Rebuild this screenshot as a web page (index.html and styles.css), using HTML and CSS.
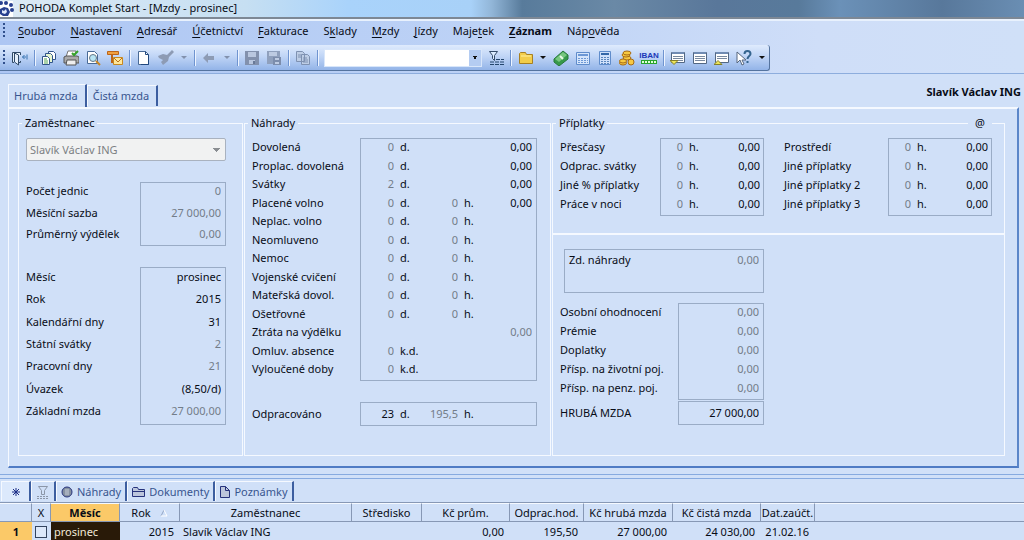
FILE: index.html
```html
<!DOCTYPE html>
<html lang="cs">
<head>
<meta charset="utf-8">
<title>POHODA Komplet Start - [Mzdy - prosinec]</title>
<link rel="stylesheet" href="styles.css">
</head>
<body>
<header class="titlebar">
  <svg class="logo" width="16" height="16" viewBox="0 0 16 16"><path d="M0 0h13v16H0z" fill="#fff"/><g fill="#27408f"><path d="M0 8l4-2 4 1 2 4-2 4H3l-3-2z"/><circle cx="1" cy="2" r="2"/><circle cx="6" cy="2" r="2"/><circle cx="11" cy="4" r="2"/><circle cx="12" cy="9" r="2"/></g><path d="M2 9l2 1 2-2 1 3-2 2-3-1z" fill="#dfe8fa"/></svg>
  <span>POHODA Komplet Start - [Mzdy - prosinec]</span>
</header>
<div class="bars">
  <nav class="menu">
    <span class="grip"></span>
    <a href="#"><u>S</u>oubor</a><a href="#"><u>N</u>astavení</a><a href="#"><u>A</u>dresář</a><a href="#"><u>Ú</u>četnictví</a><a href="#"><u>F</u>akturace</a><a href="#">S<u>k</u>lady</a><a href="#"><u>M</u>zdy</a><a href="#"><u>J</u>ízdy</a><a href="#">Maje<u>t</u>ek</a><a href="#" class="strong"><u>Z</u>áznam</a><a href="#">Náp<u>o</u>věda</a>
  </nav>
  <div class="toolbar">
    <span class="grip"></span>
    <button aria-label="Konec"><svg viewBox="0 0 16 16" fill="none" stroke="#304a68"><path d="M0.500 12.500V2.500H8.500V5M8.500 11v1.500H7M0.500 12.500H2M2.500 3l4 2v10l-4-3z" fill="#e6f0fc"/><path d="M15 4.500v5M14 7H10.500M12.500 5l-2 2 2 2" stroke="#3773b0"/></svg></button>
    <i class="sep"></i>
    <button aria-label="Agendy"><svg viewBox="0 0 16 16" stroke="#31558b"><path d="M7.500 1.500h5l2 2v6h-7z" fill="#fff"/><path d="M4.500 3.500h5l2 2v7h-7z" fill="#e6f6d1"/><path d="M1.500 6.500h5l2 2v6h-7z" fill="#fff"/><path d="M3 9h3M3 11h4M3 13h4" stroke="#55a555"/></svg></button>
    <button aria-label="Tisk"><svg viewBox="0 0 16 16"><path d="M5 1h8l-2 6H3z" fill="#fff" stroke="#777"/><path d="M1 7l2-1h11l2 1v6H1z" fill="#aaa" stroke="#555"/><path d="M4 10h9v5H3z" fill="#eee" stroke="#555"/><path d="M9 3l2 2 4-4" fill="none" stroke="#36a329" stroke-width="2"/></svg></button>
    <button aria-label="Náhled"><svg viewBox="0 0 16 16"><path d="M2.500 1.500h7l3 3v9h-10z" fill="#fff" stroke="#496a96"/><circle cx="8" cy="8" r="3.500" fill="#b8e6f5" stroke="#678"/><path d="M11 11l4 4" stroke="#c78624" stroke-width="2"/></svg></button>
    <button aria-label="Odeslat"><svg viewBox="0 0 16 16"><path d="M0.500 1.500h11v3h-11z" fill="#f0a040" stroke="#bc6418"/><path d="M5 5v8" stroke="#bc6418" stroke-width="2"/><path d="M6.500 7.500h9v7h-9z" fill="#ffe69a" stroke="#c78820"/><path d="M7 8l4 4 4-4" fill="none" stroke="#b87317"/></svg></button>
    <i class="sep"></i>
    <button aria-label="Nový"><svg viewBox="0 0 16 16"><path d="M2.500 1.500h7l3 3v10h-10z" fill="#fff" stroke="#496a96"/><path d="M9.500 1.500v3h3M12.500 5v9.500H5" fill="none" stroke="#20477d"/></svg></button>
    <button aria-label="Uložit a zavřít"><svg viewBox="0 0 16 16" fill="#8d9bb4"><path d="M0 6l5-2 4 1 5-5 2 2-5 5-1 4-5 4-2-3 2-2-4-2z"/></svg></button>
    <button class="drop muted" aria-label="Další volby"></button>
    <i class="sep"></i>
    <button aria-label="Zpět"><svg viewBox="0 0 16 16" fill="#8d9bb4"><path d="M2 8l5-5v3h6v4H7v3z"/></svg></button>
    <button class="drop muted" aria-label="Historie"></button>
    <i class="sep"></i>
    <button aria-label="Uložit"><svg viewBox="0 0 16 16"><path d="M1 1h14v14H1z" fill="#8291ad"/><path d="M4 2h8v5H4zM5 10h6v4H5z" fill="#b9c7df"/><path d="M9 11h2v3H9z" fill="#687997"/></svg></button>
    <button aria-label="Uložit kopii"><svg viewBox="0 0 16 16"><path d="M1 1h13v13H1z" fill="#8fa0bd"/><path d="M3 2h8v4H3z" fill="#bdcbe2"/><path d="M7 7h8v8H7z" fill="#7c8dac"/><path d="M9 8h4v2H9zM9 12h4v2H9z" fill="#becce3"/></svg></button>
    <i class="sep"></i>
    <button aria-label="Kopírovat"><svg viewBox="0 0 16 16" fill="#bdcde5" stroke="#7e91b1"><path d="M1.500 1.500h6l2 2v8h-8zM6.500 4.500h6l2 2v8h-8z"/><path d="M3 5h3M3 7h3M8 8h4M8 10h5M8 12h5"/></svg></button>
    <i class="sep"></i>
    <select class="search" aria-label="Hledat"><option></option></select>
    <button aria-label="Výběr"><svg viewBox="0 0 16 16"><path d="M1.500 1.500h8l-3 4v5l-2-2v-3z" fill="#dcecff" stroke="#334a68"/><path d="M8 9.500h8M2 12h14M2 14.500h14" stroke="#24466d" stroke-dasharray="4 1"/></svg></button>
    <i class="sep"></i>
    <button aria-label="Složka"><svg viewBox="0 0 16 16"><path d="M2.500 3.500l1-1h5l1 2h6v9h-13z" fill="#f2cd4b" stroke="#a78022"/><path d="M4 6h10" stroke="#fff0a0"/></svg></button>
    <button class="drop" aria-label="Složky"></button>
    <button aria-label="Platba"><svg viewBox="0 0 16 16"><path d="M1 9l9-8 5 4v4l-9 7-5-4z" fill="#37994a" stroke="#27783b"/><path d="M2 9l8-7 4 3-8 7z" fill="#78c780"/><path d="M7 6l3 3" stroke="#e9f9e6" stroke-width="2"/></svg></button>
    <button aria-label="Kalkulačka"><svg viewBox="0 0 16 16"><path d="M1.500 2.500h13v12h-13z" fill="#d5e5fb" stroke="#5f8ccb"/><path d="M3 5h10" stroke="#6c98d6" stroke-width="2"/><path d="M3 8.500h10M3 10.500h10M3 12.500h10" stroke="#6c98d6" stroke-dasharray="2 1"/></svg></button>
    <button aria-label="Výpočet"><svg viewBox="0 0 16 16"><path d="M2.500 1.500h11v13h-11z" fill="#cfe0fa" stroke="#5f8ccb"/><path d="M4 4h8" stroke="#3468a8" stroke-width="2"/><path d="M4 7.500h8M4 9.500h8M4 11.500h8M4 13.500h8" stroke="#5a86bd" stroke-dasharray="2 1"/></svg></button>
    <button aria-label="Mince"><svg viewBox="0 0 16 16" fill="#f7c942" stroke="#a66a15"><ellipse cx="8" cy="8" rx="4" ry="2"/><ellipse cx="7" cy="5" rx="4" ry="2"/><ellipse cx="8" cy="3" rx="4" ry="2"/><ellipse cx="4" cy="13" rx="3.500" ry="2"/><ellipse cx="4" cy="11" rx="3.500" ry="2"/><circle cx="12" cy="12" r="3"/></svg></button>
    <button class="code" aria-label="IBAN"><span>IBAN</span><svg viewBox="0 0 16 4"><path d="M0 0h16v4H0z" fill="#28a52c"/><path d="M1 2h14" stroke="#dfffd8" stroke-width="2" stroke-dasharray="2 1"/></svg></button>
    <i class="sep"></i>
    <button aria-label="Poslední záznam"><svg viewBox="0 0 16 16"><path d="M1.500 2.500h13v10h-13z" fill="#fff" stroke="#526783"/><path d="M2 3h12" stroke="#6f8bb3" stroke-width="2"/><path d="M3 6.500h10M3 8.500h10M3 10.500h10" stroke="#7889a0"/><path d="M0 10.500h8l-4 4z" fill="#ede55a" stroke="#858029"/></svg></button>
    <button aria-label="Tabulka"><svg viewBox="0 0 16 16"><path d="M1.500 2.500h13v11h-13z" fill="#fff" stroke="#526783"/><path d="M2 3h12" stroke="#6f8bb3" stroke-width="2"/><path d="M3 6.500h10M3 8.500h10M3 10.500h10" stroke="#7889a0"/></svg></button>
    <button aria-label="První záznam"><svg viewBox="0 0 16 16"><path d="M1.500 2.500h13v10h-13z" fill="#fff" stroke="#526783"/><path d="M2 3h12" stroke="#6f8bb3" stroke-width="2"/><path d="M3 6.500h10M3 8.500h10" stroke="#7889a0"/><path d="M0 14.500h8l-4-4z" fill="#ede55a" stroke="#858029"/></svg></button>
    <button aria-label="Nápověda"><svg viewBox="0 0 16 16"><path d="M1 2v11l3-3 2 5 2-1-2-4h4z" fill="#fff" stroke="#56677e"/><path d="M8.500 4c0-4 6-4 6 0 0 2-3 2-3 5M11.500 11v2" fill="none" stroke="#35658f" stroke-width="2"/></svg></button>
    <button class="drop" aria-label="Další nápověda"></button>
  </div>
</div>
<main>
  <div class="formhead">
    <div class="tabs"><button class="tab active">Hrubá mzda</button><button class="tab">Čistá mzda</button></div>
    <strong>Slavík Václav ING</strong>
  </div>
  <form class="panel">
    <fieldset class="employee">
      <legend>Zaměstnanec</legend>
      <select class="person" aria-label="Zaměstnanec" disabled><option>Slavík Václav ING</option></select>
      <div class="pair short">
        <div class="labels"><label for="a1">Počet jednic</label><label for="a2">Měsíční sazba</label><label for="a3">Průměrný výdělek</label></div>
        <div class="box"><input id="a1" class="dim" value="0"><input id="a2" class="dim" value="27 000,00"><input id="a3" class="dim" value="0,00"></div>
      </div>
      <div class="pair month">
        <div class="labels"><label for="b1">Měsíc</label><label for="b2">Rok</label><label for="b3">Kalendářní dny</label><label for="b4">Státní svátky</label><label for="b5">Pracovní dny</label><label for="b6">Úvazek</label><label for="b7">Základní mzda</label></div>
        <div class="box"><input id="b1" value="prosinec"><input id="b2" value="2015"><input id="b3" value="31"><input id="b4" class="dim" value="2"><input id="b5" class="dim" value="21"><input id="b6" value="(8,50/d)"><input id="b7" class="dim" value="27 000,00"></div>
      </div>
    </fieldset>
    <fieldset class="leave">
      <legend>Náhrady</legend>
      <div class="pair days">
        <div class="labels"><label for="c1">Dovolená</label><label for="c2">Proplac. dovolená</label><label for="c3">Svátky</label><label for="c4">Placené volno</label><label for="c5">Neplac. volno</label><label for="c6">Neomluveno</label><label for="c7">Nemoc</label><label for="c8">Vojenské cvičení</label><label for="c9">Mateřská dovol.</label><label for="c10">Ošetřovné</label><label for="c11">Ztráta na výdělku</label><label for="c12">Omluv. absence</label><label for="c13">Vyloučené doby</label></div>
        <div class="box">
          <div class="row"><input id="c1" class="dim" value="0"><span>d.</span><input class="sum" aria-label="Dovolená Kč" value="0,00"></div>
          <div class="row"><input id="c2" class="dim" value="0"><span>d.</span><input class="sum" aria-label="Proplacená dovolená Kč" value="0,00"></div>
          <div class="row"><input id="c3" class="dim" value="2"><span>d.</span><input class="sum" aria-label="Svátky Kč" value="0,00"></div>
          <div class="row"><input id="c4" class="dim" value="0"><span>d.</span><input class="dim" aria-label="Placené volno h." value="0"><span>h.</span><input class="sum" aria-label="Placené volno Kč" value="0,00"></div>
          <div class="row"><input id="c5" class="dim" value="0"><span>d.</span><input class="dim" aria-label="Neplacené volno h." value="0"><span>h.</span></div>
          <div class="row"><input id="c6" class="dim" value="0"><span>d.</span><input class="dim" aria-label="Neomluveno h." value="0"><span>h.</span></div>
          <div class="row"><input id="c7" class="dim" value="0"><span>d.</span><input class="dim" aria-label="Nemoc h." value="0"><span>h.</span></div>
          <div class="row"><input id="c8" class="dim" value="0"><span>d.</span><input class="dim" aria-label="Vojenské cvičení h." value="0"><span>h.</span></div>
          <div class="row"><input id="c9" class="dim" value="0"><span>d.</span><input class="dim" aria-label="Mateřská dovolená h." value="0"><span>h.</span></div>
          <div class="row"><input id="c10" class="dim" value="0"><span>d.</span><input class="dim" aria-label="Ošetřovné h." value="0"><span>h.</span></div>
          <div class="row"><input id="c11" class="sum dim" value="0,00"></div>
          <div class="row"><input id="c12" class="dim" value="0"><span>k.d.</span></div>
          <div class="row"><input id="c13" class="dim" value="0"><span>k.d.</span></div>
        </div>
      </div>
      <div class="pair single">
        <div class="labels"><label for="d1">Odpracováno</label></div>
        <div class="box"><div class="row"><input id="d1" value="23"><span>d.</span><input class="dim" aria-label="Odpracováno h." value="195,5"><span>h.</span></div></div>
      </div>
    </fieldset>
    <fieldset class="extras">
      <legend>Příplatky</legend>
      <span class="at">@</span>
      <div class="bonus">
        <div class="pair four">
          <div class="labels"><label for="e1">Přesčasy</label><label for="e2">Odprac. svátky</label><label for="e3">Jiné % příplatky</label><label for="e4">Práce v noci</label></div>
          <div class="box">
            <div class="hrow"><input id="e1" class="dim" value="0"><span>h.</span><input aria-label="Přesčasy Kč" value="0,00"></div>
            <div class="hrow"><input id="e2" class="dim" value="0"><span>h.</span><input aria-label="Odpracované svátky Kč" value="0,00"></div>
            <div class="hrow"><input id="e3" class="dim" value="0"><span>h.</span><input aria-label="Jiné % příplatky Kč" value="0,00"></div>
            <div class="hrow"><input id="e4" class="dim" value="0"><span>h.</span><input aria-label="Práce v noci Kč" value="0,00"></div>
          </div>
        </div>
        <div class="pair four">
          <div class="labels"><label for="f1">Prostředí</label><label for="f2">Jiné příplatky</label><label for="f3">Jiné příplatky 2</label><label for="f4">Jiné příplatky 3</label></div>
          <div class="box">
            <div class="hrow"><input id="f1" class="dim" value="0"><span>h.</span><input aria-label="Prostředí Kč" value="0,00"></div>
            <div class="hrow"><input id="f2" class="dim" value="0"><span>h.</span><input aria-label="Jiné příplatky Kč" value="0,00"></div>
            <div class="hrow"><input id="f3" class="dim" value="0"><span>h.</span><input aria-label="Jiné příplatky 2 Kč" value="0,00"></div>
            <div class="hrow"><input id="f4" class="dim" value="0"><span>h.</span><input aria-label="Jiné příplatky 3 Kč" value="0,00"></div>
          </div>
        </div>
      </div>
      <div class="gross">
        <div class="box health"><label for="g1">Zd. náhrady</label><input id="g1" class="dim" value="0,00"></div>
        <div class="pair five">
          <div class="labels"><label for="h1">Osobní ohodnocení</label><label for="h2">Prémie</label><label for="h3">Doplatky</label><label for="h4">Přísp. na životní poj.</label><label for="h5">Přísp. na penz. poj.</label></div>
          <div class="box"><input id="h1" class="dim" value="0,00"><input id="h2" class="dim" value="0,00"><input id="h3" class="dim" value="0,00"><input id="h4" class="dim" value="0,00"><input id="h5" class="dim" value="0,00"></div>
        </div>
        <div class="pair single">
          <div class="labels"><label for="i1">HRUBÁ MZDA</label></div>
          <div class="box"><input id="i1" value="27 000,00"></div>
        </div>
      </div>
    </fieldset>
  </form>
</main>
<section class="records">
  <div class="tabs low">
    <button class="tab star active" aria-label="Vše"><svg width="8" height="8" viewBox="0 0 8 8" stroke="#1b2d86"><path d="M4 0v8M0 4h8M1 1l6 6M7 1L1 7"/></svg></button>
    <button class="tab filter" aria-label="Filtr"><svg width="14" height="14" viewBox="0 0 14 14" fill="none" stroke="#8b96a8"><path d="M2.500 1.500h9l-3 4v4h-3v-4z"/><path d="M1 11.500h12M1 13.500h12" stroke-dasharray="2 1"/></svg></button>
    <button class="tab"><svg width="12" height="12" viewBox="0 0 12 12"><circle cx="6" cy="6" r="5" fill="#8590a0" stroke="#26337c"/><path d="M4 4h4M4 6h4M4 8h4" stroke="#c7ceda"/></svg>Náhrady</button>
    <button class="tab"><svg width="13" height="12" viewBox="0 0 13 12"><path d="M.5 10.500v-8l1-1h4l1 2h6v7z" fill="#bcc6dc" stroke="#26337c"/><path d="M1 5.500h11" stroke="#26337c"/></svg>Dokumenty</button>
    <button class="tab"><svg width="10" height="12" viewBox="0 0 10 12"><path d="M.5.5h5l4 4v7h-9z" fill="#bcc6dc" stroke="#26337c"/><path d="M5.500.5v4h4" fill="none" stroke="#26337c"/></svg>Poznámky</button>
  </div>
  <table>
    <colgroup><col class="w32"><col class="w19"><col class="w69"><col class="w60"><col class="w172"><col class="w70"><col class="w88"><col class="w74"><col class="w89"><col class="w88"><col class="w54"><col></colgroup>
    <thead><tr><th></th><th>X</th><th class="current">Měsíc</th><th>Rok<svg class="sort" width="8" height="8" viewBox="0 0 8 8"><path d="M1 7L4 1" stroke="#92a5c4"/><path d="M4 1l3 6H1" fill="none" stroke="#fff"/></svg></th><th>Zaměstnanec</th><th>Středisko</th><th>Kč prům.</th><th>Odprac.hod.</th><th>Kč hrubá mzda</th><th>Kč čistá mzda</th><th>Dat.zaúčt.</th><th></th></tr></thead>
    <tbody><tr><td class="number">1</td><td class="check"><input type="checkbox" aria-label="Označit záznam 1"></td><td class="selected">prosinec</td><td class="num">2015</td><td>Slavík Václav ING</td><td></td><td class="num">0,00</td><td class="num">195,50</td><td class="num">27 000,00</td><td class="num">24 030,00</td><td class="num">21.02.16</td><td></td></tr></tbody>
  </table>
</section>
</body>
</html>
```

FILE: styles.css
```css
* { box-sizing: border-box; }
body { margin: 0; background: #d0e0f8; color: #080c16; font: 11px/16px "Noto Sans", "Open Sans", sans-serif; overflow: hidden; }
button, input, select { font: inherit; color: inherit; }
button { border: 0; padding: 0; background: none; }
svg { flex-shrink: 0; }
a { color: inherit; text-decoration: none; }
u { text-underline-offset: 2px; }
.titlebar { display: flex; align-items: center; gap: 3px; height: 19px; border-bottom: 2px solid #7d8895; background: linear-gradient(90deg, #dceaf5 0, #c6dff2 24%, #a9d3fb 34%, #a8d1f8 46%, #92b6d8 48%, #587b9b 51%, #6a89a6 60%, #59779a 70%, #587a9b 78%, #6b91b8 82%, #58789b 92%, #6a8eb3 100%); }
.titlebar span { padding-bottom: 1px; }
.bars { border-top: 2px solid #e8f1fd; border-bottom: 1px solid #8daddd; background: linear-gradient(90deg, #adc6f3, #bed3f6 50%, #cfdef8 80%, #d0e0f8); }
.menu { display: flex; align-items: center; gap: 15px; height: 24px; padding: 0 0 4px 3px; }
.menu .grip { margin-right: -3px; }
.grip { width: 3px; height: 16px; background: repeating-linear-gradient(#304f8c 0 2px, transparent 2px 4px) 0 0 / 2px 100% no-repeat; }
.strong { font-weight: 700; }
.toolbar { display: flex; align-items: center; gap: 6px; width: max-content; height: 26px; margin-bottom: 2px; padding: 0 3px; border-right: 1px solid #55749f; border-bottom: 1px solid #55749f; border-radius: 0 3px 3px 0; background: linear-gradient(#dfebfd, #c0d5f6 45%, #93b4e8); }
.toolbar svg { display: block; width: 16px; height: 16px; }
.toolbar .code { width: 16px; height: 14px; font: 700 8px/9px "Liberation Sans", sans-serif; color: #1b38b8; }
.code span { display: flex; justify-content: center; }
.toolbar .code svg { height: 4px; }
.sep { width: 1px; height: 16px; background: #6f94d0; box-shadow: 1px 0 #edf4ff; }
.drop { display: grid; place-items: center; width: 8px; height: 16px; }
.drop::after { content: ""; border: 3px solid transparent; border-top-color: #111; border-bottom: 0; }
.drop.muted::after { border-top-color: #8291ad; }
.search { appearance: none; width: 158px; height: 18px; border: 1px solid #d8e6fa; border-radius: 0; background: linear-gradient(to bottom right, #111 50%, transparent 50%) right 3px center / 3px 3px no-repeat, linear-gradient(to bottom left, #111 50%, transparent 50%) right 6px center / 3px 3px no-repeat, linear-gradient(#b4ccf2, #b4ccf2) right / 12px 100% no-repeat, #fff; }
main { padding: 10px 5px 6px 8px; border-bottom: 1px solid #86aae0; }
.formhead { display: flex; justify-content: space-between; align-items: flex-start; margin-right: -2px; }
.tabs { display: flex; }
.tab { display: flex; align-items: center; gap: 4px; height: 21px; margin-top: 1px; padding: 0 5px; border-top: 1px solid #f5f9ff; border-left: 1px solid #f5f9ff; border-right: 2px solid #3c5ea0; color: #38558f; }
.formhead .tab { padding-right: 7px; }
.formhead .active { height: 23px; margin-top: 0; }
.panel { display: grid; grid-template-columns: 225px 307px minmax(440px, 1fr); gap: 1px; padding: 6px 12px 10px 9px; border: solid #f5f9ff; border-width: 2px 2px 2px 1px; border-right-color: #5b86c9; border-bottom-color: #4f7bc4; }
fieldset { position: relative; min-width: 0; margin: 0; padding: 7px 13px 29px 7px; border: 1px solid #f5f9ff; }
legend { margin-left: -4px; padding: 0 3px; }
.extras legend { margin-left: 3px; }
.person { appearance: none; display: block; width: 100%; height: 23px; padding: 0 3px; border: 1px solid #a9b2bf; border-radius: 2px; opacity: 1; color: #7c8083; background: linear-gradient(to bottom right, #8a8e92 50%, transparent 50%) right 4px center / 4px 4px no-repeat, linear-gradient(to bottom left, #8a8e92 50%, transparent 50%) right 8px center / 4px 4px no-repeat, #f1f2f2; }
.employee { padding-right: 16px; }
.pair { display: grid; grid-template-columns: 1fr 86px; }
.leave .pair { grid-template-columns: 1fr 177px; }
.labels, .pair .box { display: flex; flex-direction: column; justify-content: space-between; padding: 0 0 3px; }
.labels { border: solid transparent; border-width: 1px 0; }
.labels label { white-space: nowrap; }
.box { border: 1px solid #9aacc6; }
.box input { display: block; width: 100%; min-width: 0; height: 16px; padding: 0 4px 0 0; border: 0; background: none; text-align: right; }
.box .dim { color: #737d89; }
.short { min-height: 64px; margin-top: 21px; }
.month { min-height: 158px; margin-top: 21px; }
.month .labels, .month .box { padding: 1px 0 5px; }
.days { min-height: 243px; }
.single { min-height: 24px; }
.pair.single .box, .single .labels { padding: 3px 0; }
.leave .single { margin-top: 21px; }
.row { display: grid; grid-template-columns: 33px 30px 34px 28px 1fr; height: 16px; }
.row span, .hrow span { padding-left: 6px; }
.row input, .hrow input { padding: 0; }
.row .sum { grid-column: 5; padding-right: 4px; }
.hrow { display: grid; grid-template-columns: 22px 26px 1fr; height: 16px; }
.hrow input:last-child { padding-right: 3px; }
.extras { padding-left: 0; padding-right: 0; }
.at { position: absolute; top: -16px; right: 12px; padding: 0 7px; background: #d0e0f8; }
.bonus { display: grid; grid-template-columns: 204px 208px; gap: 20px; padding: 0 0 17px 7px; border-bottom: 2px solid #f5f9ff; }
.bonus .pair { grid-template-columns: 1fr 104px; min-height: 78px; }
.gross { width: 211px; padding: 14px 0 0 7px; }
.health { display: grid; grid-template-columns: 1fr 80px; height: 44px; margin-left: 4px; padding: 2px 0 0 4px; }
.five { min-height: 97px; margin-top: 10px; }
.gross .single { margin-top: 1px; }
.records { margin-top: 3px; border-top: 1px solid #86aae0; }
.low { padding: 1px 0 1px 1px; }
.low .tab { height: 20px; padding: 0 4px; }
.low .star { width: 30px; justify-content: center; background: #dce9fc; }
.low .filter { width: 25px; justify-content: center; }
table { width: 100%; table-layout: fixed; border-collapse: separate; border-spacing: 0; border-top: 1px solid #8798b5; }
th, td { height: 19px; padding: 0 3px; font-weight: 400; text-align: left; white-space: nowrap; overflow: hidden; }
th { padding: 0; border-top: 1px solid #f5f9ff; border-right: 1px solid #8798b5; border-bottom: 1px solid #8798b5; text-align: center; }
th:last-child { border-right: 0; }
.current { font-weight: 700; background: #fbc968; }
.sort { margin-left: 9px; }
.number { background: #fbc968; font-weight: 700; text-align: center; }
.selected { background: #291a08; color: #f3ead8; }
.num { text-align: right; padding-right: 6px; }
.check input { appearance: none; display: block; width: 12px; height: 12px; margin: 0; border: 1px solid #34445f; background: #dce8fa; }
.w32 { width: 32px; } .w19 { width: 19px; } .w69 { width: 69px; } .w60 { width: 60px; } .w172 { width: 172px; } .w70 { width: 70px; } .w88 { width: 88px; } .w74 { width: 74px; } .w89 { width: 89px; } .w54 { width: 54px; }
```
